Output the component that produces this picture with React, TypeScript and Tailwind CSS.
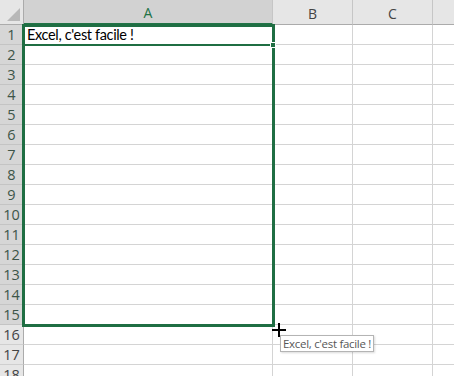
const ROWS = Array.from({ length: 18 }, (_, i) => i + 1);

const COLS = [
  { label: "A", w: "w-[249px]", selected: true },
  { label: "B", w: "w-[80px]", selected: false },
  { label: "C", w: "w-[80px]", selected: false },
  { label: "", w: "w-[60px]", selected: false },
];

function CornerCell() {
  return (
    <div className="relative h-[25px] w-[24px] shrink-0 border-r border-b border-[#ababab] bg-[#e6e6e6]">
      <svg className="absolute right-[3px] bottom-[3px]" width="13" height="13" viewBox="0 0 13 13">
        <polygon points="13,0 13,13 0,13" fill="#b8b8b8" />
      </svg>
    </div>
  );
}

function HeaderRow() {
  return (
    <div className="flex h-[25px]">
      <CornerCell />
      {COLS.map((c, i) =>
        c.selected ? (
          <div
            key={i}
            className={`${c.w} flex h-[25px] shrink-0 items-center justify-center border-r border-b-2 border-r-[#c6c6c6] border-b-[#217346] bg-[#d2d2d2] pt-[2px] text-[14px] text-[#217346]`}
          >
            {c.label}
          </div>
        ) : (
          <div
            key={i}
            className={`${c.w} flex h-[25px] shrink-0 items-center justify-center border-r border-b border-r-[#c6c6c6] border-b-[#ababab] bg-[#e6e6e6] pt-[2px] text-[14px] text-[#444444]`}
          >
            {c.label}
          </div>
        )
      )}
    </div>
  );
}

function Row({ n }: { n: number }) {
  const selected = n <= 15;
  return (
    <div className="flex h-[20px]">
      <div
        className={
          selected
            ? "flex h-[20px] w-[24px] shrink-0 items-center justify-center border-r border-b border-r-[#8aa596] border-b-[#c4c4c4] bg-[#d6d6d6] text-[14.5px] text-[#3d5548]"
            : "flex h-[20px] w-[24px] shrink-0 items-center justify-center border-r border-b border-r-[#ababab] border-b-[#cfcfcf] bg-[#e6e6e6] text-[14.5px] text-[#444444]"
        }
      >
        {n}
      </div>
      {COLS.map((c, i) => (
        <div
          key={i}
          className={`${c.w} h-[20px] shrink-0 overflow-visible whitespace-nowrap border-r border-b border-[#d4d4d4] bg-white pl-[3px] font-['Lato','Liberation_Sans',sans-serif] text-[14.5px] leading-[20px] tracking-[-0.35px] text-black`}
        >
          {n === 1 && i === 0 ? "Excel, c'est facile !" : ""}
        </div>
      ))}
    </div>
  );
}

export default function App() {
  return (
    <div className="relative h-[376px] w-[454px] overflow-hidden bg-white font-['Open_Sans','Liberation_Sans',sans-serif]">
      <HeaderRow />
      {ROWS.map((n) => (
        <Row key={n} n={n} />
      ))}

      {/* selection range A1:A15 */}
      <div className="pointer-events-none absolute left-[22px] top-[24px] h-[303px] w-[253px] border-[3px] border-[#1f6e43]" />
      {/* active cell bottom edge */}
      <div className="pointer-events-none absolute left-[24px] top-[44px] h-[2px] w-[249px] bg-[#1f6e43]" />
      {/* fill handle */}
      <div className="pointer-events-none absolute left-[270px] top-[42px] h-[6px] w-[6px] border border-white bg-[#1f6e43]" />

      {/* cursor */}
      <svg className="pointer-events-none absolute left-[272px] top-[323px]" width="14" height="14" viewBox="0 0 14 14">
        <rect x="6" y="0" width="2" height="14" fill="#000" />
        <rect x="0" y="6" width="14" height="2" fill="#000" />
      </svg>

      {/* tooltip */}
      <div className="absolute left-[280px] top-[335px] flex h-[17px] items-center border border-[#b4b4b4] bg-white px-[2px] text-[11.5px] leading-none tracking-[-0.3px] text-[#575757] shadow-[1px_1px_2px_rgba(0,0,0,0.15)]">
        Excel, c'est facile !
      </div>
    </div>
  );
}
